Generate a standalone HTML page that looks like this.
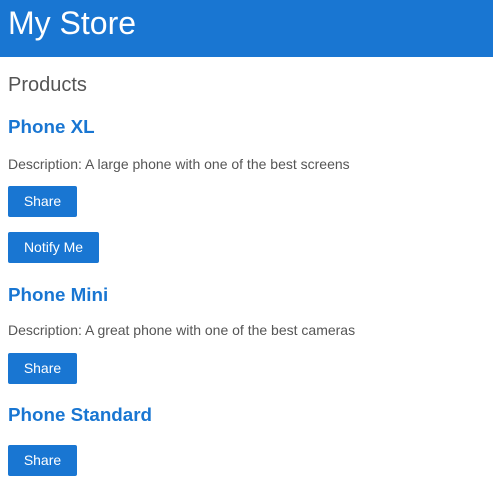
<!DOCTYPE html>
<html><head><style>
body{margin:0;width:493px;height:489px;overflow:hidden;background:#fff;font-family:"Liberation Sans",Arial,sans-serif;position:relative}
.hdr{position:absolute;left:0;top:0;width:493px;height:57px;background:#1976d2}
.hdr span{position:absolute;left:8px;top:4px;font-size:32px;color:#fff;line-height:38px}
.a{position:absolute;left:8px;white-space:nowrap}
.p{font-size:20px;color:#555;line-height:24px}
.h{font-size:18.8px;font-weight:bold;color:#1976d2;line-height:24px}
.d{font-size:14px;color:#555;line-height:16px}
.b{background:#1976d2;color:#fff;font-size:14px;height:31px;line-height:31px;border-radius:2px;text-align:center}
</style></head><body>
<div class="hdr"><span>My Store</span></div>
<div class="a p" style="top:73px">Products</div>
<div class="a h" style="top:115px">Phone XL</div>
<div class="a d" style="top:156px">Description: A large phone with one of the best screens</div>
<div class="a b" style="top:186px;width:69px">Share</div>
<div class="a b" style="top:232px;width:91px">Notify Me</div>
<div class="a h" style="top:283px">Phone Mini</div>
<div class="a d" style="top:322px">Description: A great phone with one of the best cameras</div>
<div class="a b" style="top:353px;width:69px">Share</div>
<div class="a h" style="top:403px">Phone Standard</div>
<div class="a b" style="top:445px;width:69px">Share</div>
</body></html>
